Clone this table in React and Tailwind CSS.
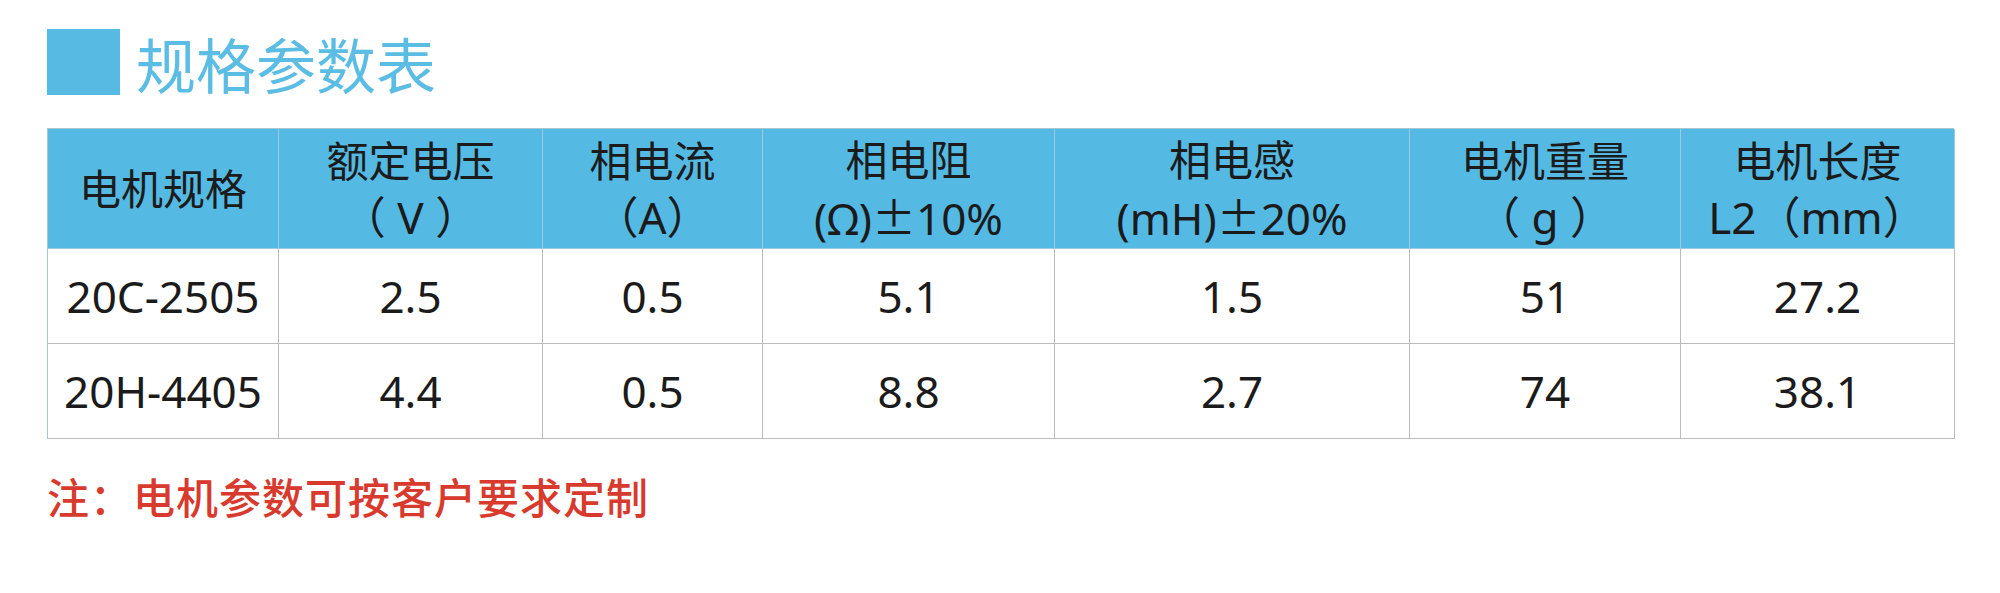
import React from 'react';

const font = { fontFamily: '"Noto Sans", "Noto Sans CJK SC", sans-serif' };

const Pm = () => <span style={{ fontFamily: '"Noto Sans CJK SC", sans-serif' }}>±</span>;

// column widths in px, each includes the cell's right border
const headers = [
  ['电机规格'],
  ['额定电压', '（ V ）'],
  ['相电流', '（A）'],
  ['相电阻', <>(Ω)<Pm />10%</>],
  ['相电感', <>(mH)<Pm />20%</>],
  ['电机重量', '（ g ）'],
  ['电机长度', 'L2（mm）'],
];

const rows = [
  ['20C-2505', '2.5', '0.5', '5.1', '1.5', '51', '27.2'],
  ['20H-4405', '4.4', '0.5', '8.8', '2.7', '74', '38.1'],
];

function HeaderCell({ lines }) {
  return (
    <div className="flex h-[120px] flex-col items-center justify-center border-r border-b border-[#9fc9dc] bg-[#54b9e3] text-[42px] leading-[56px] text-[#1b1b1b]">
      {lines.map((l, i) => (
        <span key={i} className={i === 1 ? 'whitespace-pre text-[44px]' : 'whitespace-pre'}>{l}</span>
      ))}
    </div>
  );
}

function DataCell({ value }) {
  return (
    <div className="flex h-[95px] items-center justify-center border-r border-b border-[#bcbcbc] text-[44px] text-[#1b1b1b]">
      {value}
    </div>
  );
}

export default function App() {
  return (
    <div className="h-[593px] w-[2000px] bg-white pl-[47px] pt-[29px]" style={font}>
      <div className="flex h-[66px] items-center">
        <div className="h-[66px] w-[73px] bg-[#56bae3]" />
        <div className="ml-[16px] mt-[8px] text-[60px] leading-none text-[#5bbce4]">规格参数表</div>
      </div>

      <div className="mt-[33px] grid w-[1907px] grid-cols-[231px_264px_220px_292px_355px_271px_274px] border-t border-l border-[#a9c6d3]">
        {headers.map((h, i) => (
          <HeaderCell key={i} lines={h} />
        ))}
        {rows.map((r, ri) =>
          r.map((v, ci) => <DataCell key={ri + '-' + ci} value={v} />)
        )}
      </div>

      <div className="mt-[34px] text-[42px] font-medium leading-[50px] tracking-[1px] text-[#d83a2e]">
        注：电机参数可按客户要求定制
      </div>
    </div>
  );
}
